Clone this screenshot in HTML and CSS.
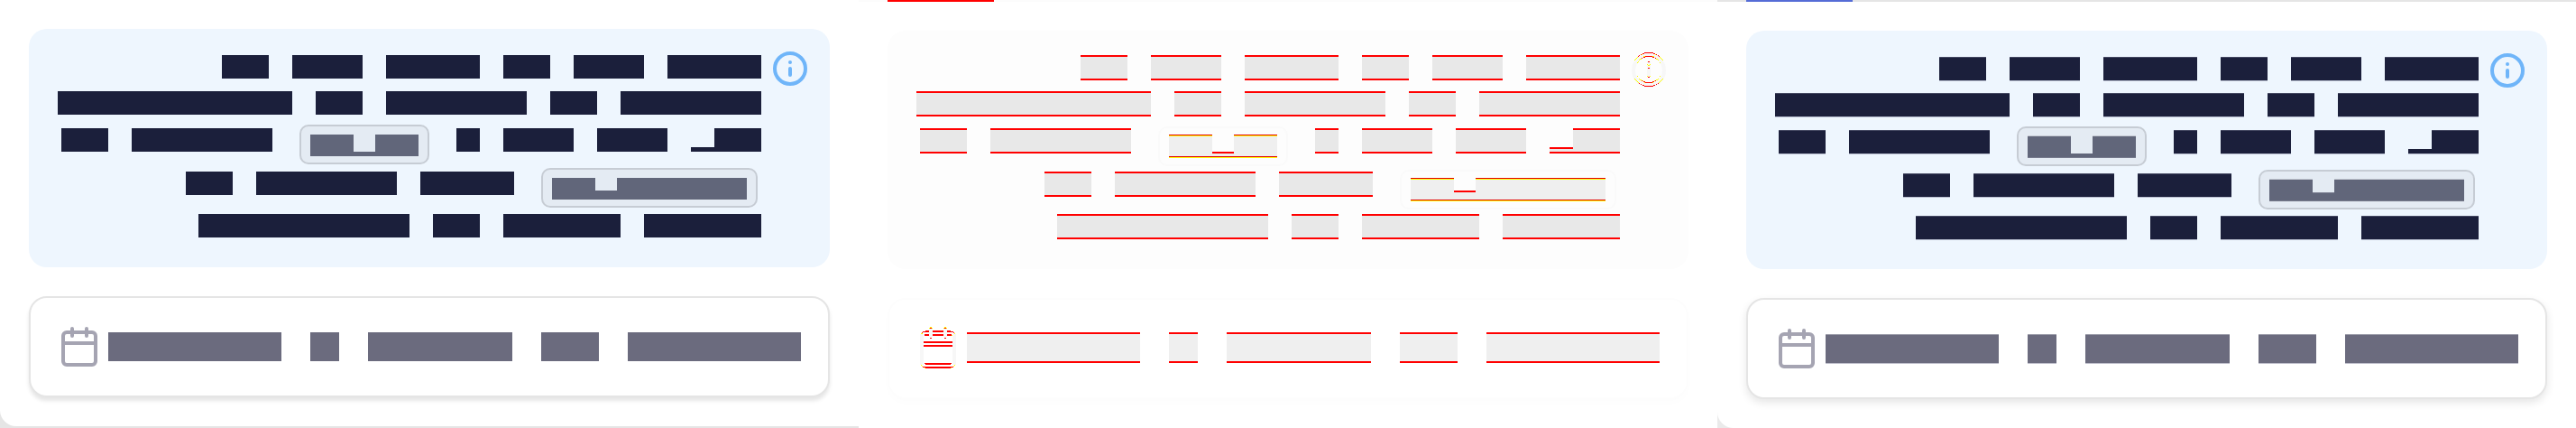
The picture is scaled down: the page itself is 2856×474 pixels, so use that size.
FILE: index.html
```html
<!DOCTYPE html>
<html lang="en">
<head>
<meta charset="utf-8">
<title>Date field states</title>
<link rel="stylesheet" href="styles.css">
</head>
<body>
<main class="board">
  <section class="panel before">
    <div class="sheet">
      <div class="notice">
        <div class="copy">
          <div class="line"><i class="w2"></i><i class="w3"></i><i class="w4"></i><i class="w2"></i><i class="w3"></i><i class="w4"></i></div>
          <div class="line"><i class="w10"></i><i class="w2"></i><i class="w6"></i><i class="w2"></i><i class="w6"></i></div>
          <div class="line tall"><i class="w2"></i><i class="w6"></i><span class="chip"><i class="w2"></i><i class="w1 low"></i><i class="w2"></i></span><i class="w1"></i><i class="w3"></i><i class="w3"></i><span class="joined"><i class="w1 base"></i><i class="w2"></i></span></div>
          <div class="line tall"><i class="w2"></i><i class="w6"></i><i class="w4"></i><span class="chip"><i class="w2"></i><i class="w1 mid"></i><i class="w6"></i></span></div>
          <div class="line"><i class="w9"></i><i class="w2"></i><i class="w5"></i><i class="w5"></i></div>
        </div>
        <svg class="info" viewBox="0 0 24 24" aria-hidden="true"><circle cx="12" cy="12" r="8.5"/><path d="M12 12v3.5"/><circle class="dot" cx="12" cy="8.5" r="1"/></svg>
      </div>
      <button class="field" type="button" aria-label="Select dates">
        <svg class="calendar" viewBox="0 0 24 24" aria-hidden="true"><rect x="3" y="4" width="18" height="18" rx="2"/><path d="M8 2v4M16 2v4M3 10h18"/></svg>
        <span class="value"><i class="w6"></i><i class="w1"></i><i class="w5"></i><i class="w2"></i><i class="w6"></i></span>
      </button>
    </div>
  </section>

  <section class="panel delta">
    <div class="tabs"><span class="tab"></span></div>
    <div class="sheet">
      <div class="notice">
        <div class="copy">
          <div class="line"><i class="w2"></i><i class="w3"></i><i class="w4"></i><i class="w2"></i><i class="w3"></i><i class="w4"></i></div>
          <div class="line"><i class="w10"></i><i class="w2"></i><i class="w6"></i><i class="w2"></i><i class="w6"></i></div>
          <div class="line tall"><i class="w2"></i><i class="w6"></i><span class="chip"><i class="w2"></i><i class="w1 low"></i><i class="w2"></i></span><i class="w1"></i><i class="w3"></i><i class="w3"></i><span class="joined"><i class="w1 base"></i><i class="w2"></i></span></div>
          <div class="line tall"><i class="w2"></i><i class="w6"></i><i class="w4"></i><span class="chip"><i class="w2"></i><i class="w1 mid"></i><i class="w6"></i></span></div>
          <div class="line"><i class="w9"></i><i class="w2"></i><i class="w5"></i><i class="w5"></i></div>
        </div>
        <svg class="info" viewBox="0 0 48 48" aria-hidden="true">
          <circle class="faint" cx="24" cy="24" r="17"/>
          <path class="faint" d="M24 14v17"/>
          <path class="yellow" d="M8 12.500h1M9 11.500h1M10 10.500h1M11 9.500h1M12 8.500h1M15 6.500h2M31 6.500h2M35 8.500h1M36 9.500h1M37 10.500h1M38 11.500h1M39 12.500h1M8 33.500h1M9 34.500h1M10 35.500h1M11 36.500h1M12 37.500h1M35 37.500h1M36 36.500h1M37 35.500h1M38 34.500h1M39 33.500h1M11 15.500h1M12 14.500h1M13 12.500h1M14 11.500h2M16 10.500h1M18 8.500h2M28 8.500h2M31 10.500h1M32 11.500h2M34 12.500h1M36 15.500h1M11 30.500h1M13 33.500h1M14 34.500h2M16 35.500h2M19 37.500h1M28 37.500h1M30 35.500h2M32 34.500h2M34 33.500h1M36 30.500h1M22 17.500h1M25 17.500h1M23 18.500h2M22 30.500h1M25 30.500h1"/>
          <path class="red" d="M19 4.500h10M17 5.500h2M29 5.500h2M15 6.500h1M32 6.500h1M13 7.500h1M34 7.500h1M12 8.500h1M35 8.500h1M20 8.500h8M18 9.500h2M28 9.500h2M16 10.500h1M31 10.500h1M16 35.500h1M31 35.500h1M18 36.500h2M28 36.500h2M20 37.500h8M13 38.500h1M34 38.500h1M15 39.500h1M32 39.500h1M17 40.500h2M29 40.500h2M19 41.500h10M23 14.500h2M23 21.500h2M23 31.500h2"/>
        </svg>
      </div>
      <button class="field" type="button" aria-label="Select dates">
        <svg class="calendar" viewBox="0 0 48 48" aria-hidden="true">
          <path class="faint" d="M6 8v34M42 8v34M16 2v9M32 2v9"/>
          <path class="yellow" d="M15 .500h2M31 .500h2M14 1.500h4M30 1.500h4M9 5.500h2M37 5.500h2M5 7.500h2M42 7.500h1M9 9.500h2M38 9.500h2M5 42.500h1M42 42.500h1M6 43.500h1M41 43.500h1M9 45.500h1M38 45.500h1"/>
          <path class="red" d="M15 1.500h2M31 1.500h2M15 12.500h2M31 12.500h2M7 5.500h3M6 6.500h1M38 5.500h3M41 6.500h1M7 44.500h34M10 45.500h28M9 40.500h30M10 41.500h28"/>
          <path class="red wide" d="M10 5h4M18 5h12M34 5h4M9 9h5M18 9h12M34 9h5M8 17h32M8 21h32"/>
        </svg>
        <span class="value"><i class="w6"></i><i class="w1"></i><i class="w5"></i><i class="w2"></i><i class="w6"></i></span>
      </button>
    </div>
  </section>

  <section class="panel after">
    <div class="tabs"><span class="tab"></span></div>
    <div class="sheet">
      <div class="notice">
        <div class="copy">
          <div class="line"><i class="w2"></i><i class="w3"></i><i class="w4"></i><i class="w2"></i><i class="w3"></i><i class="w4"></i></div>
          <div class="line"><i class="w10"></i><i class="w2"></i><i class="w6"></i><i class="w2"></i><i class="w6"></i></div>
          <div class="line tall"><i class="w2"></i><i class="w6"></i><span class="chip"><i class="w2"></i><i class="w1 low"></i><i class="w2"></i></span><i class="w1"></i><i class="w3"></i><i class="w3"></i><span class="joined"><i class="w1 base"></i><i class="w2"></i></span></div>
          <div class="line tall"><i class="w2"></i><i class="w6"></i><i class="w4"></i><span class="chip"><i class="w2"></i><i class="w1 mid"></i><i class="w6"></i></span></div>
          <div class="line"><i class="w9"></i><i class="w2"></i><i class="w5"></i><i class="w5"></i></div>
        </div>
        <svg class="info" viewBox="0 0 24 24" aria-hidden="true"><circle cx="12" cy="12" r="8.5"/><path d="M12 12v3.5"/><circle class="dot" cx="12" cy="8.5" r="1"/></svg>
      </div>
      <button class="field" type="button" aria-label="Select dates">
        <svg class="calendar" viewBox="0 0 24 24" aria-hidden="true"><rect x="3" y="4" width="18" height="18" rx="2"/><path d="M8 2v4M16 2v4M3 10h18"/></svg>
        <span class="value"><i class="w6"></i><i class="w1"></i><i class="w5"></i><i class="w2"></i><i class="w6"></i></span>
      </button>
    </div>
  </section>
</main>
</body>
</html>
```

FILE: styles.css
```css
* { box-sizing: border-box; }

body {
  margin: 0;
  background: #fff;
  font-family: "Liberation Sans", Arial, sans-serif;
}

.board {
  display: grid;
  grid-template-columns: repeat(3, 1fr);
  min-height: 100vh;
}

.panel {
  --lead: 6px;
  --word-height: 26px;
  --chip-word-height: 24px;
  --chip-top: 9px;
  --value-height: 32px;
  --value-top: 8px;
  --drop: 19px;
  --ink: #1b1f3b;
  --chip-ink: #61667a;
  --value-ink: #6b6b7e;
  display: flex;
  flex-direction: column;
}

.sheet {
  flex: 1;
  display: flex;
  flex-direction: column;
  gap: 32px;
  padding: 32px 32px 24px;
  background: #fff;
}

.tabs { display: flex; height: 2px; padding-left: 32px; background: #e5e5e5; }
.tab { width: 118px; background: #556cd6; }

/* Notice */
.notice {
  display: flex;
  align-items: flex-start;
  gap: 8px;
  padding: 20px 20px 25px 32px;
  border-radius: 20px;
  background: #eef6fe;
}

.copy { flex: 1; padding-top: 3px; font-size: 26px; }

.line {
  display: flex;
  justify-content: flex-end;
  align-items: flex-start;
  gap: 26px;
  height: 40px;
}
.line > i, .joined { margin-top: var(--lead); }
.tall { height: 48px; padding-top: 1px; }
.joined { display: flex; align-items: flex-end; }

i { display: block; flex: none; height: var(--word-height); background: var(--ink); }
.w1 { width: 1em; }
.w2 { width: 2em; }
.w3 { width: 3em; }
.w4 { width: 4em; }
.w5 { width: 5em; }
.w6 { width: 6em; }
.w9 { width: 9em; }
.w10 { width: 10em; }
.base { height: calc(var(--word-height) - 21px); }

.chip {
  display: flex;
  align-items: flex-start;
  height: 44px;
  margin: 2px 4px 0;
  padding: var(--chip-top) 10px 0;
  border: 2px solid #c6ccd4;
  border-radius: 10px;
  background: #e4ebf3;
  font-size: 24px;
}
.chip i { height: var(--chip-word-height); background: var(--chip-ink); }
.chip .low { margin-top: var(--drop); height: calc(var(--chip-word-height) - var(--drop)); }
.chip .mid { margin-top: calc(var(--drop) - 5px); height: calc(var(--chip-word-height) - var(--drop) + 5px); }

.info, .calendar { flex: none; width: 48px; height: 48px; fill: none; stroke-width: 2; stroke-linecap: round; stroke-linejoin: round; }
.info { stroke: #6fb5f9; }
.info .dot { fill: #6fb5f9; stroke: none; }
.calendar { stroke: #a5a4b2; }

/* Date field */
.field {
  display: flex;
  align-items: flex-start;
  gap: 8px;
  width: 100%;
  height: 112px;
  padding: 30px;
  border: 2px solid #e5e5e5;
  border-radius: 20px;
  background: #fff;
  box-shadow: 0 4px 4px rgba(0, 0, 0, 0.1);
  font-size: 32px;
}
.value { display: flex; gap: 32px; padding-top: var(--value-top); }
.value i { height: var(--value-height); background: var(--value-ink); }

/* Before */
.before { padding-bottom: 2px; background: #e5e5e5; }
.before .sheet { border-bottom-left-radius: 18px; }

/* Delta */
.delta {
  --lead: 4px;
  --word-height: 28px;
  --chip-word-height: 26px;
  --chip-top: 7px;
  --value-height: 34px;
  --value-top: 6px;
  --ink: #e8e8e8;
  --chip-ink: #efefef;
  --value-ink: #efefef;
}
.delta .tabs { background: #fcfcfc; }
.delta .tab { background: #f00; }
.delta .notice { background: #fdfdfd; }
.delta i { border: solid #f00; border-width: 2px 0; }
.delta .chip { border-color: #fafafa; background: #fdfdfd; }
.delta .chip i {
  border: 0;
  background:
    linear-gradient(#e00000 1px, #ff0 1px) top / 100% 2px no-repeat,
    linear-gradient(#e00000 1px, #ff0 1px) bottom / 100% 2px no-repeat,
    #efefef;
}
.delta .chip .low, .delta .chip .mid {
  background:
    linear-gradient(#f00, #f00) top / 100% 2px no-repeat,
    linear-gradient(#e00000 1px, #ff0 1px) bottom / 100% 2px no-repeat,
    #efefef;
}
.delta .field { border-color: #fdfdfd; box-shadow: 0 4px 8px rgba(0, 0, 0, 0.01); }
.delta .faint { stroke: #f7f7f7; stroke-width: 4; stroke-linecap: butt; }
.delta .red, .delta .yellow { stroke-width: 1; stroke-linecap: butt; }
.delta .red { stroke: #f00; }
.delta .yellow { stroke: #ff0; }
.delta .wide { stroke-width: 2; }

/* After */
.after {
  --word-height: 27px;
  --chip-word-height: 25px;
  --chip-top: 8px;
  --value-height: 33px;
  --drop: 20px;
  background: #eaeaea;
}
.after .sheet { border-bottom-left-radius: 18px; }
.after i { border: solid; border-width: 1px 0; border-color: #454962 transparent #bbc1d2; }
.after .base { border-top: 0; }
.after .chip i { border-color: #c5cad3 transparent #777b8d; }
.after .chip .low { border-top: 0; }
.after .chip .mid { border-top-color: #777b8d; }
.after .value i { border-color: #9b9ca9 transparent #bfbfcb; }
.after .field { box-shadow: 0 4px 10px rgba(0, 0, 0, 0.1); }
```
